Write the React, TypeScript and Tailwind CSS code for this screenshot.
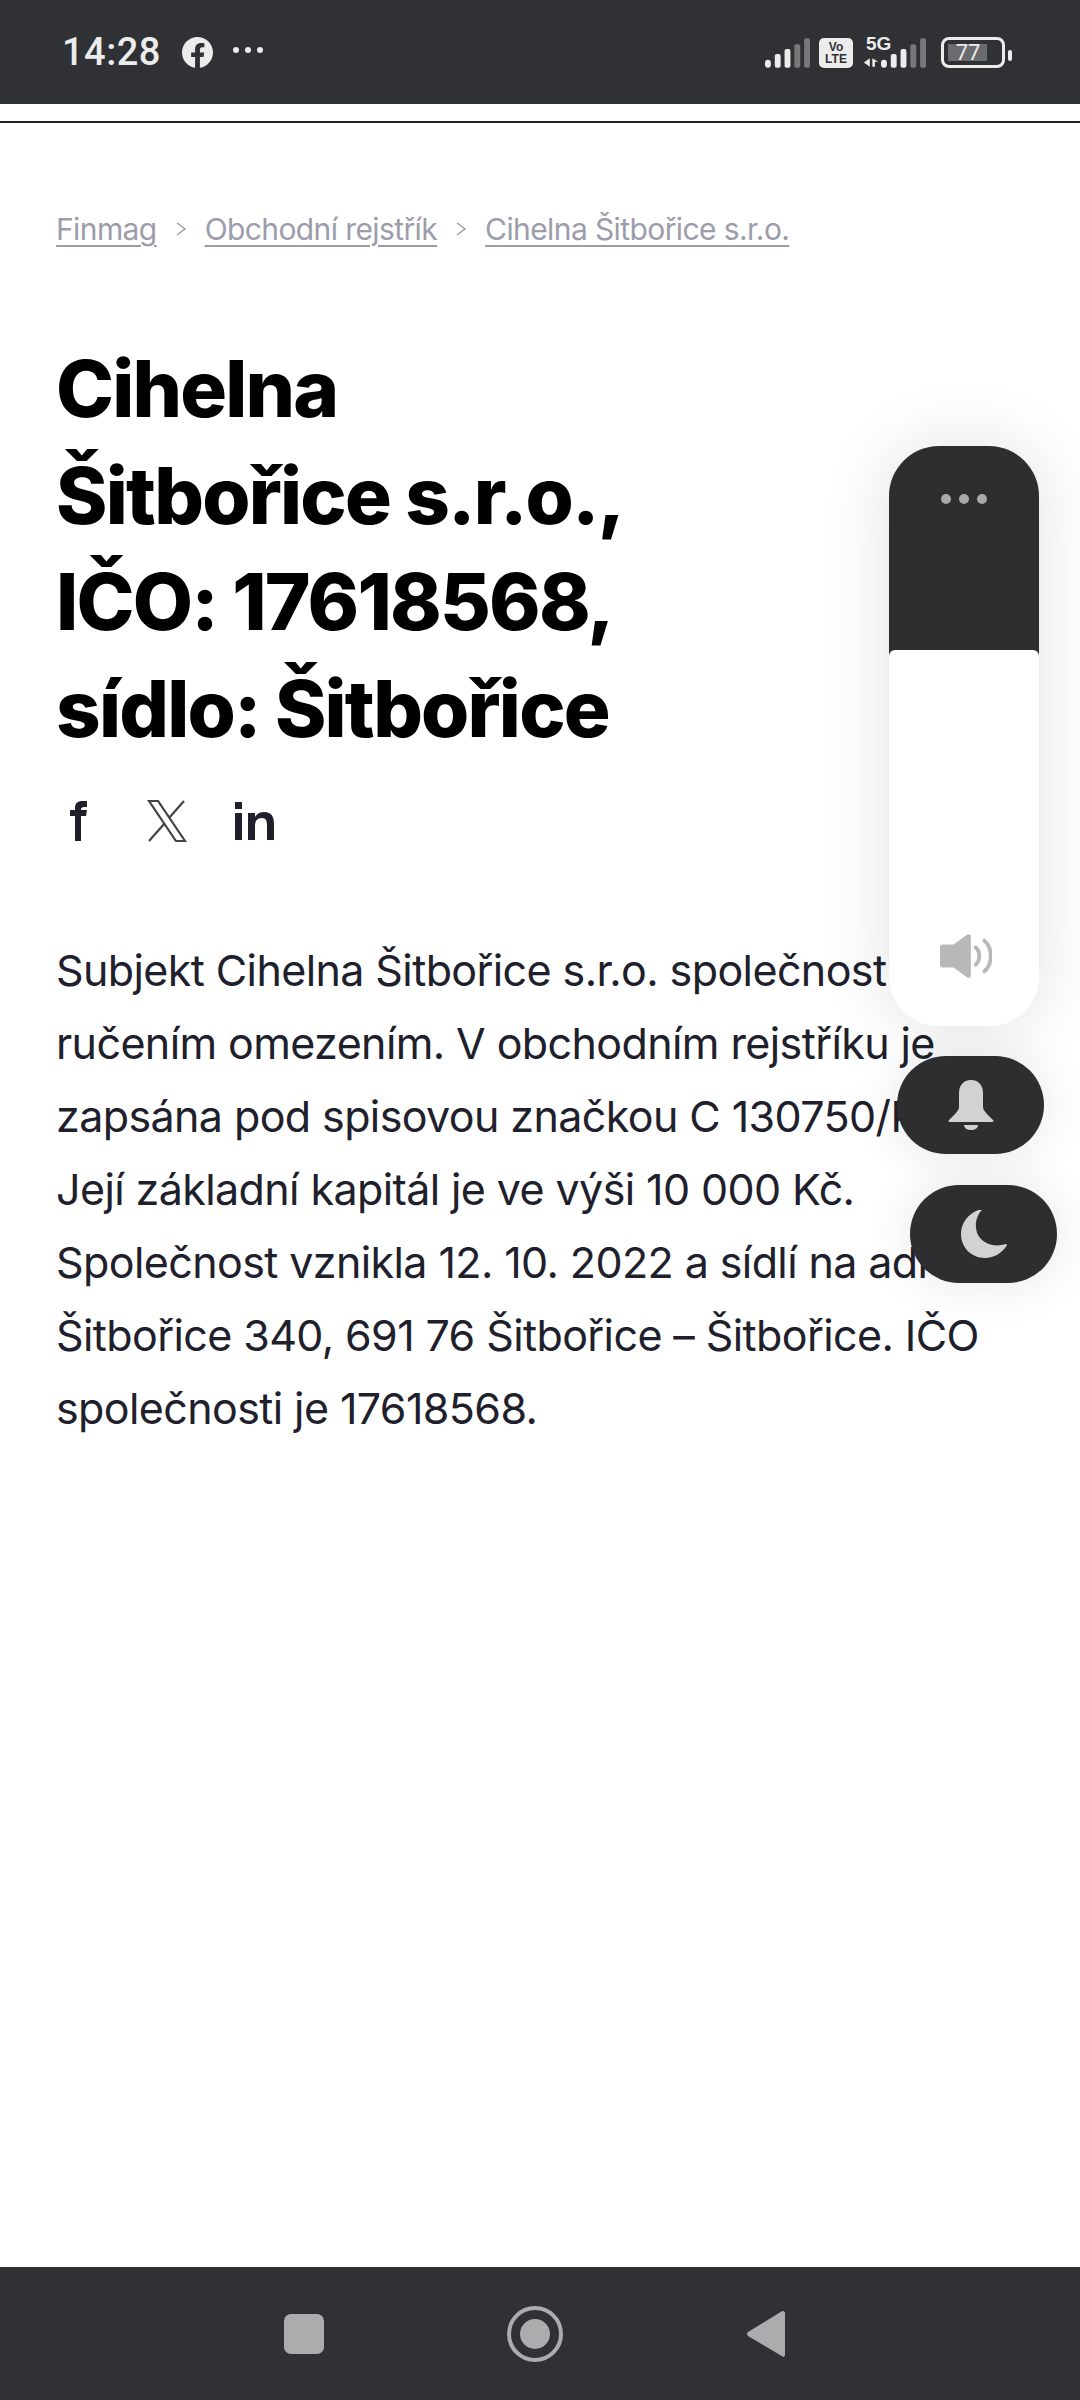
import React from 'react';

const SignalBars = ({ className }: { className?: string }) => (
    <svg viewBox="0 0 46 30" className={className} fill="#ececec">
        <rect x="0" y="22" width="6" height="8" rx="3" />
        <rect x="10" y="16" width="6" height="14" rx="2" />
        <rect x="20" y="11" width="6" height="19" rx="2" />
        <rect x="30" y="6" width="6" height="24" rx="2" fill="#77787a" />
        <rect x="40" y="0" width="6" height="30" rx="2" fill="#77787a" />
    </svg>
);

const StatusBar = () => (
    <div className="h-[104px] bg-[#303135] flex items-center justify-between pl-[62px] pr-[68px] shrink-0">
        <div className="flex items-center">
            <span className="font-['Roboto',sans-serif] font-medium text-[38px] leading-none tracking-[0.5px] text-[#ececec]">14:28</span>
            <svg viewBox="0 0 32 32" className="w-[31px] h-[31px] ml-[21px]">
                <path fill="#ececec" d="M32 16C32 7.16 24.84 0 16 0S0 7.16 0 16c0 7.99 5.85 14.6 13.5 15.8V20.6H9.44V16h4.06v-3.5c0-4 2.39-6.22 6.04-6.22 1.75 0 3.58.31 3.58.31v3.94h-2.02c-1.99 0-2.6 1.23-2.6 2.5V16h4.43l-.71 4.6H18.5v11.2C26.15 30.6 32 23.99 32 16z" />
            </svg>
            <div className="flex gap-[6px] ml-[20px] mb-[4px]">
                <span className="w-[6px] h-[6px] rounded-full bg-[#ececec]" />
                <span className="w-[6px] h-[6px] rounded-full bg-[#ececec]" />
                <span className="w-[6px] h-[6px] rounded-full bg-[#ececec]" />
            </div>
        </div>
        <div className="flex items-end h-[32px]">
            <SignalBars className="w-[45px] h-[30px]" />
            <div className="ml-[9px] w-[34px] h-[30px] rounded-[5px] bg-[#ececec] flex flex-col items-center justify-center font-['Liberation_Sans',sans-serif] font-bold text-[#303135] text-[12px] leading-[12px]">
                <span>Vo</span>
                <span>LTE</span>
            </div>
            <div className="relative ml-[10px] w-[64px] h-[32px]">
                <span className="absolute left-[3px] top-[-2px] font-['Liberation_Sans',sans-serif] font-bold text-[19px] leading-none text-[#ececec]">5G</span>
                <svg viewBox="0 0 20 12" className="absolute left-0 bottom-0 w-[17px] h-[11px]" fill="#ececec">
                    <path d="M8 1v10L1 6zM11 1l7 4h-4v6h-3z" />
                </svg>
                <SignalBars className="absolute left-[18px] bottom-0 w-[45px] h-[30px]" />
            </div>
            <div className="ml-[14px] w-[64px] h-[31px] rounded-[8px] border-[3px] border-[#ececec] p-[4px] relative">
                <div className="w-[39px] h-full bg-[#6a6b6e]" />
                <span className="absolute inset-0 flex items-center justify-center pr-[10px] font-['Roboto',sans-serif] text-[22px] leading-none text-[#ececec]">77</span>
            </div>
            <div className="ml-[3px] mb-[7px] w-[4px] h-[11px] rounded-full bg-[#ececec]" />
        </div>
    </div>
);

const NavBar = () => (
    <div className="h-[133px] bg-[#303135] flex items-center shrink-0 pl-[284px]">
        <div className="w-[40px] h-[40px] rounded-[7px] bg-[#abacae]" />
        <svg viewBox="0 0 56 56" className="w-[56px] h-[56px] ml-[183px]">
            <circle cx="28" cy="28" r="26" fill="none" stroke="#abacae" strokeWidth="4" />
            <circle cx="28" cy="28" r="15" fill="#abacae" />
        </svg>
        <svg viewBox="0 0 38 46" className="w-[38px] h-[46px] ml-[184px]">
            <path fill="#abacae" d="M36 0c1 0 2 1 2 2v42c0 1.500-1 2-2.500 1.500L1 25c-1.300-1-1.300-3 0-4L34 .7C34.700.2 35.400 0 36 0z" />
        </svg>
    </div>
);

const Crumb = ({ children }: { children: React.ReactNode }) => (
    <a className="underline decoration-[2px] underline-offset-[5px]">{children}</a>
);

const Chevron = () => (
    <svg viewBox="0 0 12 16" className="w-[12px] h-[16px] mx-[18px]" fill="none" stroke="#9d9cab" strokeWidth="1.500">
        <path d="M2 2l8 6-8 6" />
    </svg>
);

const SidePanel = () => (
    <div className="absolute left-[889px] top-[446px] flex flex-col items-start">
        <div className="w-[150px] h-[580px] rounded-[50px] shadow-[0_0_70px_rgba(0,0,0,0.12)] flex flex-col">
            <div className="h-[210px] shrink-0 rounded-t-[50px] bg-[#2e2e30] flex justify-center gap-[8px] pt-[48px]">
                <span className="w-[10px] h-[10px] rounded-full bg-[#a9a9a9]" />
                <span className="w-[10px] h-[10px] rounded-full bg-[#a9a9a9]" />
                <span className="w-[10px] h-[10px] rounded-full bg-[#a9a9a9]" />
            </div>
            <div className="relative flex-1 -mt-[6px] bg-white rounded-t-[6px] rounded-b-[50px] flex items-end justify-center pb-[47px]">
                <svg viewBox="0 0 54 46" className="w-[52px] h-[46px] ml-[3px]" fill="#b8b8b8">
                    <path d="M0 14c0-2 1-3 3-3h11L28 1c2-1.500 4-.5 4 2v40c0 2.500-2 3.500-4 2L14 35H3c-2 0-3-1-3-3z" />
                    <path d="M37 14c5 4 5 14 0 18M46 7c9 8 9 24 0 32" fill="none" stroke="#b8b8b8" strokeWidth="4" strokeLinecap="round" />
                </svg>
            </div>
        </div>
        <div className="w-[147px] h-[98px] ml-[8px] mt-[30px] rounded-full bg-[#2e2e30] shadow-[0_0_50px_rgba(0,0,0,0.1)] flex items-center justify-center">
            <svg viewBox="0 0 46 50" className="w-[46px] h-[50px]" fill="#d2d2d2">
                <path d="M23 0c8 0 12 6 12 13v14c0 4 6 9 10 13 1 1 .5 2-1 2H2c-1.500 0-2-1-1-2 4-4 10-9 10-13V13C11 6 15 0 23 0z" />
                <path d="M16 45h14c0 3-3 5-7 5s-7-2-7-5z" />
            </svg>
        </div>
        <div className="w-[147px] h-[98px] ml-[21px] mt-[31px] rounded-full bg-[#2e2e30] shadow-[0_0_50px_rgba(0,0,0,0.1)] flex items-center justify-center">
            <svg viewBox="0 0 46 48" className="w-[46px] h-[48px]" fill="#d2d2d2">
                <path d="M21 0C13 8 13 22 20 29c6 6 15 8 25 5 1 0 1 1 .5 2C41 43 33 48 24 48 10 48 0 37 0 24 0 12 8 3 20-1c1 0 1.500 0 1 1z" />
            </svg>
        </div>
    </div>
);

export default function App() {
    return (
        <div className="relative w-[1080px] h-[2400px] bg-white flex flex-col overflow-hidden">
            <StatusBar />
            <div className="h-[17px] shrink-0" />
            <div className="h-[2px] bg-[#222226] shrink-0" />
            <main className="flex-1 px-[56px] font-['Inter',sans-serif]">
                <nav className="flex items-center mt-[88px] text-[30px] leading-[36px] tracking-[-0.6px] text-[#9d9cab]">
                    <Crumb>Finmag</Crumb>
                    <Chevron />
                    <Crumb>Obchodní rejstřík</Crumb>
                    <Chevron />
                    <Crumb>Cihelna Šitbořice s.r.o.</Crumb>
                </nav>
                <h1 className="mt-[89px] text-[78px] leading-[106.500px] font-extrabold tracking-[-1.800px] text-black">
                    Cihelna<br />Šitbořice s.r.o.,<br />IČO: 17618568,<br />sídlo: Šitbořice
                </h1>
                <div className="flex items-center h-[44px] mt-[37px] text-[#20202c]">
                    <svg viewBox="0 0 18 40" className="w-[18px] h-[40px] ml-[14px]" fill="currentColor">
                        <path d="M5 40V15H0V9h5V7c0-5 3-7 7-7h5v6h-3c-2 0-3 1-3 2.500V9h6l-1 6h-5v25z" />
                    </svg>
                    <svg viewBox="0 0 40 42" className="w-[40px] h-[42px] ml-[59px]" fill="none" stroke="#444" strokeWidth="2.200">
                        <path d="M2 1h9l27 40h-9zM37 1L22 18M18 23L2 41" />
                    </svg>
                    <svg viewBox="0 0 40 38" className="w-[40px] h-[38px] ml-[48px]" fill="currentColor">
                        <path d="M0 0h7v7H0zM0 11h7v27H0zM13 11h7v4c1-2 4-5 9-5 8 0 10 5 10 12v16h-7V23c0-4-1-7-5-7-5 0-7 3-7 8v14h-7z" />
                    </svg>
                </div>
                <p className="mt-[91px] text-[43px] leading-[73px] tracking-[-0.600px] text-[#20202c] whitespace-nowrap">
                    Subjekt Cihelna Šitbořice s.r.o. společnost s<br />
                    ručením omezením. V obchodním rejstříku je<br />
                    zapsána pod spisovou značkou C 130750/KSBR.<br />
                    Její základní kapitál je ve výši 10 000 Kč.<br />
                    Společnost vznikla 12. 10. 2022 a sídlí na adrese<br />
                    Šitbořice 340, 691 76 Šitbořice – Šitbořice. IČO<br />
                    společnosti je 17618568.
                </p>
            </main>
            <NavBar />
            <SidePanel />
        </div>
    );
}
